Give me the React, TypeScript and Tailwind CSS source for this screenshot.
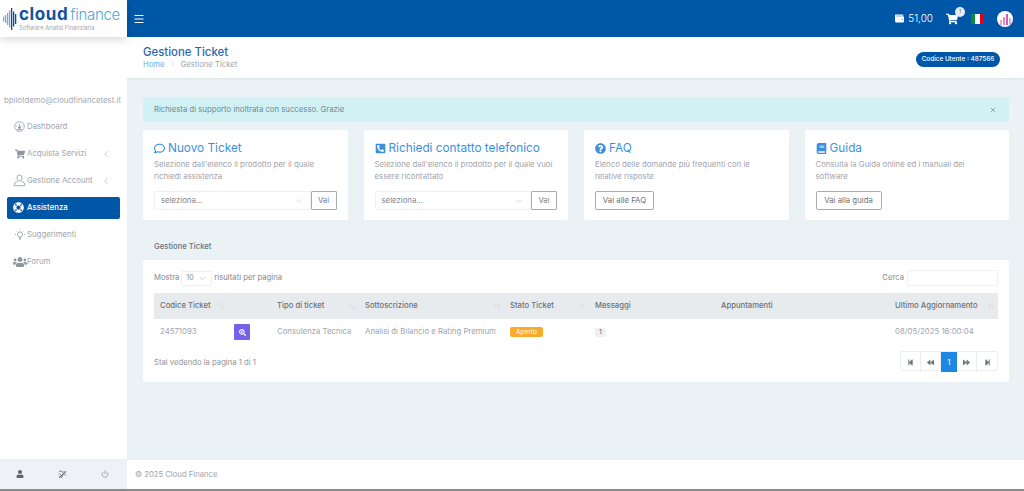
import React from "react";
import { Menu, ChevronLeft, ChevronDown, ChevronRight, X, Power, ArrowUpDown } from "lucide-react";
import { FaShoppingCart, FaLifeRing, FaUsers, FaWallet, FaRegComment, FaPhoneSquareAlt, FaQuestionCircle, FaBook, FaSearchPlus, FaStepBackward, FaBackward, FaForward, FaStepForward, FaUser } from "react-icons/fa";

function Logo() {
  const bars = [5, 8, 12, 17, 22, 15, 10];
  return (
    <div className="flex items-center gap-[2px]">
      <svg width="14" height="22" viewBox="0 0 14 22">
        {bars.map((h, i) => (
          <rect key={i} x={i * 2} y={11 - h / 2} width="1.3" height={h} fill={i > 3 ? "#0b4f9c" : "#7fa6cf"} />
        ))}
      </svg>
      <div className="flex flex-col">
        <div className="flex items-baseline leading-[14px]">
          <span className="text-[17px] font-bold tracking-[0.6px] text-[#12529b]">cloud</span>
          <span className="ml-[2px] text-[15px] font-light tracking-[-0.3px] text-[#4ba6dc]">finance</span>
        </div>
        <span className="mt-[3px] text-[5.8px] leading-[6px] text-[#a3a7ad]">Software Analisi Finanziaria</span>
      </div>
    </div>
  );
}

function GaugeIcon() {
  return (
    <svg width="11" height="11" viewBox="0 0 11 11" fill="none" stroke="#8f969e" strokeWidth="0.8">
      <circle cx="5.5" cy="5.5" r="4.8" />
      <circle cx="5.5" cy="6.6" r="1" fill="#8f969e" />
      <path d="M5.5 6V2.8M3 8.6h5M2.3 5h.8M7.9 5h.8" />
    </svg>
  );
}

function AccountIcon() {
  return (
    <svg width="13" height="13" viewBox="0 0 13 13" fill="none" stroke="#8f969e" strokeWidth="0.8">
      <path d="M4 3.8a2.5 2.8 0 1 1 5 0c0 1.6-.8 3-2.5 3S4 5.4 4 3.8Z" />
      <path d="M5 6.6c0 1.2-3.8 1.5-3.8 3.6v1.5h10.6v-1.5C11.8 8.100 8 7.800 8 6.600" />
    </svg>
  );
}

function BulbIcon() {
  return (
    <svg width="12" height="12" viewBox="0 0 12 12" fill="none" stroke="#8f969e" strokeWidth="0.8">
      <path d="M4.700 8.200C4.500 7.100 3.500 6.700 3.500 5.400a2.500 2.500 0 0 1 5 0C8.500 6.700 7.500 7.100 7.300 8.200Z" />
      <path d="M5 9.500h2M5.400 10.700h1.200M6 .4v1M1 5.400h1M10 5.400h1M2.500 1.900l.7.7M9.500 1.900l-.7.7" />
    </svg>
  );
}

function NavItem({ icon, label, chevron }: { icon: React.ReactNode; label: string; chevron?: boolean }) {
  return (
    <div className="flex h-[27px] items-center pl-[12px] pr-[16px] text-[7.8px] text-[#a0a5ac]">
      <span className="flex w-[15px] shrink-0 justify-center text-[#8f969e]">{icon}</span>
      <span className="flex-1">{label}</span>
      {chevron && <ChevronLeft size={10} strokeWidth={1.4} />}
    </div>
  );
}

function Sidebar() {
  return (
    <aside className="z-10 flex w-[127px] shrink-0 flex-col bg-white">
      <div className="flex h-[37px] items-center pl-[3px] shadow-[0_3px_8px_rgba(0,0,0,0.15)]">
        <Logo />
      </div>
      <div className="mt-[58px] whitespace-nowrap pl-[4px] text-[7.8px] leading-[10px] text-[#a6abb2]">bpilotdemo@cloudfinancetest.it</div>
      <nav className="mt-[8px] flex flex-1 flex-col">
        <NavItem icon={<GaugeIcon />} label="Dashboard" />
        <NavItem icon={<FaShoppingCart size={10} />} label="Acquista Servizi" chevron />
        <NavItem icon={<AccountIcon />} label="Gestione Account" chevron />
        <div className="flex h-[27px] items-center px-[7px]">
          <div className="flex h-[22px] flex-1 items-center rounded-[2px] bg-[#0057a8] pl-[6px] text-[7.8px] font-medium text-white">
            <FaLifeRing size={11} />
            <span className="ml-[3px]">Assistenza</span>
          </div>
        </div>
        <NavItem icon={<BulbIcon />} label="Suggerimenti" />
        <NavItem icon={<FaUsers size={14} />} label="Forum" />
      </nav>
      <div className="flex h-[30px] items-center justify-between bg-[#eef2f6] pl-[16px] pr-[18px] text-[#5d6670]">
        <FaUser size={8} />
        <svg width="9" height="9" viewBox="0 0 8 8" stroke="#5d6670" strokeWidth="0.8" fill="none">
          <path d="M1 1h2M1 3l2 2M3 1l4 4M5 1l2 2M1 5l2 2M5 3l-2 4M7 1 1 7" />
        </svg>
        <Power size={8} strokeWidth={1.5} />
      </div>
    </aside>
  );
}

function Header() {
  return (
    <header className="flex h-[37px] shrink-0 items-center bg-[#0057a8] pl-[6px] pr-[11px] text-white shadow-[0_1px_4px_rgba(0,0,0,0.25)]">
      <Menu size={12} strokeWidth={2.4} />
      <div className="ml-auto flex items-center">
        <FaWallet size={9} />
        <span className="ml-[4px] text-[10px] font-light">51,00</span>
        <div className="relative ml-[13px]">
          <FaShoppingCart size={12} />
          <span className="absolute -right-[7px] -top-[6px] flex h-[10px] w-[10px] items-center justify-center rounded-full bg-[#e8edf2] text-[5px] text-[#555]">1</span>
        </div>
        <div className="ml-[13px] flex h-[10px] w-[13px]">
          <div className="flex-1 bg-[#0b8a3e]" />
          <div className="flex-1 bg-white" />
          <div className="flex-1 bg-[#e3001b]" />
        </div>
        <div className="ml-[13px] flex h-[16px] w-[16px] items-end justify-center gap-[1px] overflow-hidden rounded-full bg-white pb-[2px]">
          <div className="h-[5px] w-[2px] bg-[#e9a7d8]" />
          <div className="h-[8px] w-[2px] bg-[#d98ccc]" />
          <div className="h-[11px] w-[2px] bg-[#d05fb8]" />
          <div className="h-[7px] w-[2px] bg-[#e9a7d8]" />
        </div>
      </div>
    </header>
  );
}

function Card({ icon, title, text, children }: { icon: React.ReactNode; title: string; text: string; children: React.ReactNode }) {
  return (
    <div className="flex h-[90px] flex-col rounded-[2px] bg-white px-[11px] pt-[11px]">
      <div className="flex h-[16px] items-center gap-[3px] text-[11.8px] text-[#3b8fe0]">
        <span className="-mt-[2px]">{icon}</span>
        <span>{title}</span>
      </div>
      <p className="mt-[1px] h-[24px] text-[7.8px] leading-[12px] text-[#9fa4ab]">{text}</p>
      <div className="mt-[9px]">{children}</div>
    </div>
  );
}

function SelectGo() {
  return (
    <div className="flex h-[19px]">
      <div className="flex flex-1 items-center justify-between rounded-l-[2px] border border-[#eef0f2] pl-[6px] pr-[6px] text-[7.8px] text-[#7f858d]">
        <span>seleziona...</span>
        <ChevronDown size={10} strokeWidth={1} className="text-[#a8adb3]" />
      </div>
      <button className="flex w-[26px] items-center justify-center rounded-[1px] border border-[#a9adb2] text-[7.8px] text-[#7a8088]">Vai</button>
    </div>
  );
}

function LinkButton({ label, width }: { label: string; width: string }) {
  return (
    <button className={`flex h-[19px] items-center justify-center rounded-[2px] border border-[#a9adb2] text-[7.8px] text-[#6c727a] ${width}`}>{label}</button>
  );
}

function Th({ label, sort, className }: { label?: string; sort?: boolean; className: string }) {
  return (
    <th className={`pl-[6px] pr-[3px] text-left text-[7.7px] font-medium text-[#6b717a] ${className}`}>
      <div className="flex items-center justify-between whitespace-nowrap">
        <span>{label}</span>
        {sort && <ArrowUpDown size={8} strokeWidth={1} className="text-[#c2c7cd]" />}
      </div>
    </th>
  );
}

function TicketTable() {
  return (
    <table className="mt-[7px] w-[844px] table-fixed border-collapse">
      <thead>
        <tr className="h-[26px] bg-[#e8ebee]">
          <Th label="Codice Ticket" sort className="w-[74px]" />
          <Th className="w-[43px]" />
          <Th label="Tipo di ticket" sort className="w-[88px]" />
          <Th label="Sottoscrizione" sort className="w-[145px]" />
          <Th label="Stato Ticket" sort className="w-[85px]" />
          <Th label="Messaggi" className="w-[126px]" />
          <Th label="Appuntamenti" className="w-[174px]" />
          <Th label="Ultimo Aggiornamento" sort className="w-[109px]" />
        </tr>
      </thead>
      <tbody>
        <tr className="h-[26px] text-[7.8px] text-[#9fa4ab]">
          <td className="px-[6px]">24571093</td>
          <td className="px-[6px]">
            <button className="flex h-[16px] w-[16px] items-center justify-center rounded-[1px] bg-[#7561e8] text-white">
              <FaSearchPlus size={7} />
            </button>
          </td>
          <td className="whitespace-nowrap px-[6px]">Consulenza Tecnica</td>
          <td className="whitespace-nowrap px-[6px]">Analisi di Bilancio e Rating Premium</td>
          <td className="px-[6px]">
            <span className="inline-block rounded-[2px] bg-[#fbab2c] px-[6px] text-[6.6px] leading-[10px] text-white">Aperto</span>
          </td>
          <td className="px-[6px]">
            <span className="inline-block rounded-[2px] bg-[#eef0f3] px-[4px] text-[6.6px] leading-[9px] text-[#555]">1</span>
          </td>
          <td />
          <td className="whitespace-nowrap px-[6px]">08/05/2025 16:00:04</td>
        </tr>
      </tbody>
    </table>
  );
}

function Pager() {
  const cell = "flex h-[20px] w-[20px] items-center justify-center border-r border-[#eceef0] text-[#6f767e]";
  return (
    <div className="flex h-[20px] rounded-[2px] border border-[#eceef0]">
      <div className={cell}><FaStepBackward size={7} /></div>
      <div className={cell}><FaBackward size={7} /></div>
      <div className="flex h-[20px] w-[16px] items-center justify-center bg-[#1c87e5] text-[8px] text-white">1</div>
      <div className={cell}><FaForward size={7} /></div>
      <div className="flex h-[20px] w-[20px] items-center justify-center text-[#6f767e]"><FaStepForward size={7} /></div>
    </div>
  );
}

export default function App() {
  return (
    <div className="flex h-screen w-full overflow-hidden border-b-2 border-[#8a8a8a] bg-white font-['Inter',sans-serif]">
      <Sidebar />
      <div className="flex min-w-0 flex-1 flex-col">
        <Header />
        <main className="flex flex-1 flex-col overflow-hidden bg-[#eaf2f6]">
          <div className="flex h-[41px] shrink-0 items-center justify-between bg-white pl-[16px] pr-[24px] shadow-[0_1px_2px_rgba(0,0,0,0.06)]">
            <div className="-mt-[1px]">
              <h1 className="text-[11.4px] font-medium leading-[14px] text-[#2a6aad]">Gestione Ticket</h1>
              <div className="flex items-center text-[7.7px] leading-[11px] text-[#a0a5ac]">
                <span className="text-[#62b0f0]">Home</span>
                <ChevronRight size={8} strokeWidth={1} className="mx-[4px]" />
                <span>Gestione Ticket</span>
              </div>
            </div>
            <div className="mt-[4px] flex h-[15px] w-[84px] items-center justify-center rounded-full bg-[#0057a8] text-[6.4px] font-medium text-white">Codice Utente : 487566</div>
          </div>
          <div className="flex flex-1 flex-col pl-[16px] pr-[15px] pt-[19px]">
            <div className="flex h-[25px] items-center justify-between rounded-[2px] bg-[#d1f1f5] pl-[11px] pr-[12px] text-[7.76px] text-[#6a8b92]">
              <span>Richiesta di supporto inoltrata con successo. Grazie</span>
              <X size={8} strokeWidth={2} className="text-[#6f8a90]" />
            </div>
            <div className="mt-[8px] grid grid-cols-4 gap-[16px]">
              <Card icon={<FaRegComment size={11} />} title="Nuovo Ticket" text="Selezione dall'elenco il prodotto per il quale richiedi assistenza"><SelectGo /></Card>
              <Card icon={<FaPhoneSquareAlt size={11} />} title="Richiedi contatto telefonico" text="Selezione dall'elenco il prodotto per il quale vuoi essere ricontattato"><SelectGo /></Card>
              <Card icon={<FaQuestionCircle size={11} />} title="FAQ" text="Elenco delle domande più frequenti con le relative risposte"><LinkButton label="Vai alle FAQ" width="w-[59px]" /></Card>
              <Card icon={<FaBook size={11} />} title="Guida" text="Consulta la Guida online ed i manuali dei software"><LinkButton label="Vai alla guida" width="w-[66px]" /></Card>
            </div>
            <h2 className="mt-[21px] pl-[11px] text-[7.7px] font-medium leading-[12px] text-[#6b717a]">Gestione Ticket</h2>
            <section className="mt-[7px] h-[122px] rounded-[2px] bg-white px-[11px] pt-[10px]">
              <div className="flex h-[16px] items-center text-[7.7px] text-[#838990]">
                <span>Mostra</span>
                <div className="ml-[2px] flex h-[15px] w-[31px] items-center justify-between rounded-[2px] border border-[#eef0f2] px-[4px] text-[7px]">
                  <span>10</span>
                  <ChevronDown size={9} strokeWidth={1} />
                </div>
                <span className="ml-[2px]">risultati per pagina</span>
                <span className="ml-auto mr-[3px]">Cerca</span>
                <div className="h-[16px] w-[91px] rounded-[1px] border border-[#eef0f2]" />
              </div>
              <TicketTable />
              <div className="mt-[6px] flex items-start justify-between text-[7.7px] leading-[12px] text-[#8d9299]">
                <span className="mt-[6px]">Stai vedendo la pagina 1 di 1</span>
                <Pager />
              </div>
            </section>
          </div>
          <footer className="flex h-[29px] shrink-0 items-center bg-white pl-[8px] text-[7.7px] text-[#9fa4ab]">© 2025 Cloud Finance</footer>
        </main>
      </div>
    </div>
  );
}
